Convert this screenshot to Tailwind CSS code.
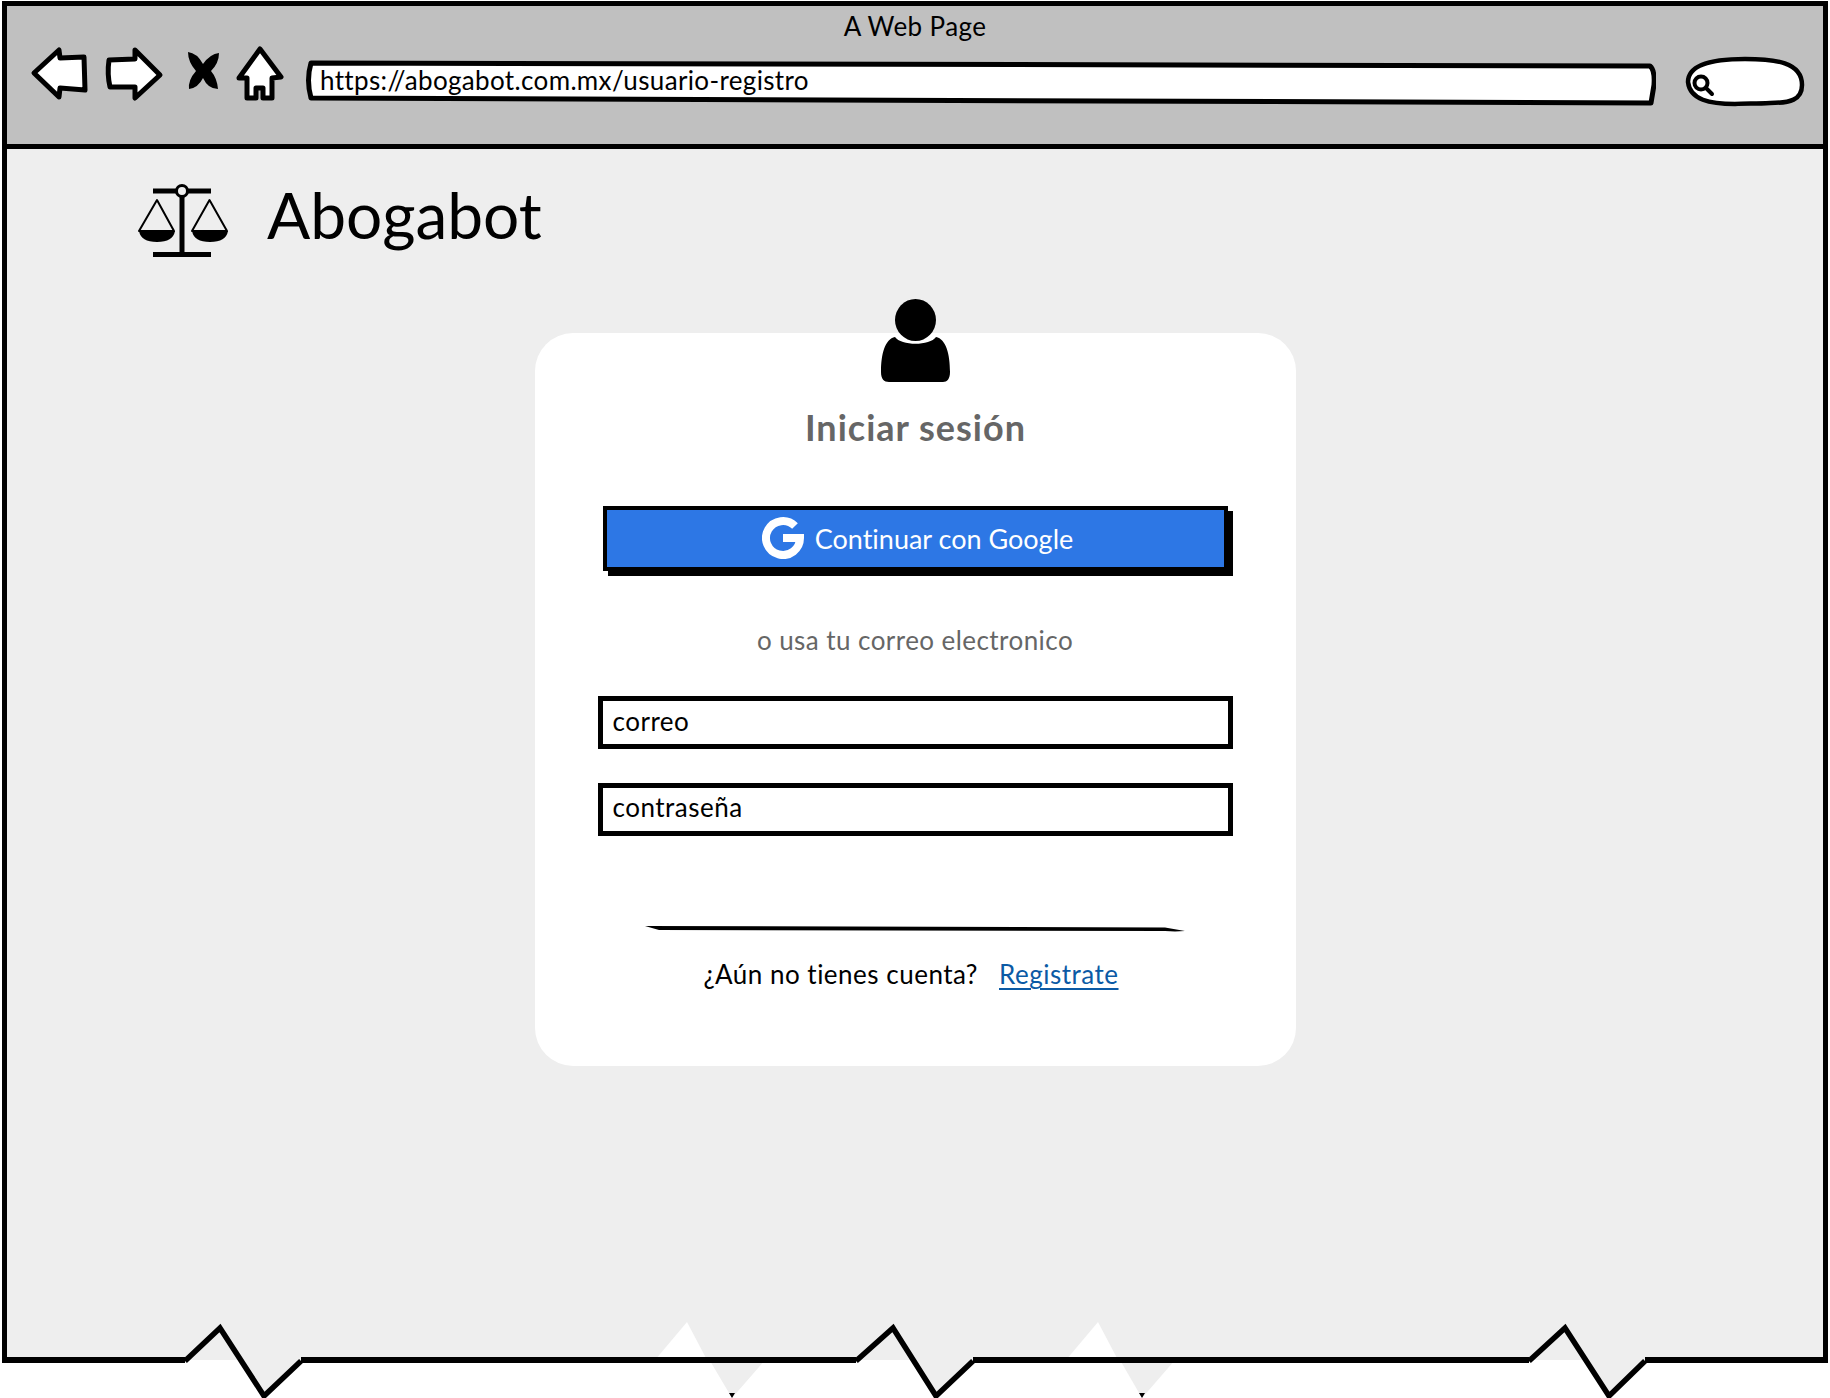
<!doctype html>
<html lang="es">
<head>
<meta charset="utf-8">
<title>Abogabot</title>
<script src="https://cdn.jsdelivr.net/npm/@tailwindcss/browser@4"></script>
</head>
<body class="bg-white">
<div class="relative w-[1830px] h-[1398px] overflow-hidden bg-white font-['Lato','Noto_Sans',sans-serif] text-black [font-variant-ligatures:none]">
  <div class="ml-[2px] mt-[1px] w-[1826px] h-[1359px] flex flex-col border-x-[5px] border-t-[5px] border-black bg-[#eeeeee]">
    <header class="h-[143px] shrink-0 bg-[#c0c0c0] border-b-[5px] border-black">
      <div class="h-[38px] flex items-center justify-center text-[26px] tracking-[0.4px] leading-none pt-[2px]">A Web Page</div>
      <div class="flex items-center pl-[23px] h-[64px]">
        <svg class="w-[58px] h-[64px] shrink-0" viewBox="30 44 58 64"><path d="M34 73 L59 50 L60 58 L84 57 L85 90 L60 88 L59 97 Z" fill="#fff" stroke="#000" stroke-width="5" stroke-linejoin="round"/></svg>
        <svg class="w-[60px] h-[64px] ml-[16px] shrink-0" viewBox="104 44 60 64"><path d="M109 60 L135 59 L135 50 L160 75 L135 98 L135 87 L110 87 Q107 74 109 60 Z" fill="#fff" stroke="#000" stroke-width="5" stroke-linejoin="round"/></svg>
        <svg class="w-[35px] h-[64px] ml-[22px] shrink-0" viewBox="186 44 35 64"><path d="M188 52 Q197 53 203 64 Q210 54 219 53 Q219 63 211 71 Q217 78 218 89 Q208 89 203 78 Q198 88 189 89 Q188 80 196 71 Q188 62 188 52 Z" fill="#000"/></svg>
        <svg class="w-[50px] h-[64px] ml-[14px] shrink-0" viewBox="235 44 50 64"><path d="M260 49 L281 77 L272 78 L272 98 L263 98 L263 88 L256 88 L256 98 L247 98 L247 78 L239 78 Z" fill="#fff" stroke="#000" stroke-width="5" stroke-linejoin="round"/></svg>
        <div class="relative w-[1351px] h-[64px] ml-[20px] shrink-0 flex items-center">
          <svg class="absolute inset-0 w-full h-full" viewBox="305 44 1351 64"><path d="M311 63 L1650 66 Q1655 70 1654 85 L1651 103 L311 98 Q306 80 311 63 Z" fill="#fff" stroke="#000" stroke-width="5" stroke-linejoin="round"/></svg>
          <span class="relative pl-[15px] pt-[8px] text-[26px] tracking-[0.35px] leading-none">https://abogabot.com.mx/usuario-registro</span>
        </div>
        <svg class="w-[122px] h-[64px] ml-[28px] shrink-0" viewBox="1684 44 122 64"><path d="M1735 104 C1710 104 1690 100 1688 82 C1688 62 1720 59 1745 59 C1775 59 1802 62 1802 85 C1802 100 1790 103 1770 103 C1755 104 1745 103 1735 104 Z" fill="#fff" stroke="#000" stroke-width="4.500"/><circle cx="1701" cy="83" r="6.500" fill="none" stroke="#000" stroke-width="4"/><path d="M1706 88 L1712 94" stroke="#000" stroke-width="4" stroke-linecap="round"/></svg>
      </div>
    </header>
    <div class="flex items-center h-[142px] mb-[42px] shrink-0 pl-[129px]">
      <svg class="w-[94px] h-[78px] shrink-0" viewBox="136 181 94 78">
        <path d="M153 191 H211 M153 254.500 H211" stroke="#000" stroke-width="5"/>
        <path d="M182 196 V253" stroke="#000" stroke-width="5"/>
        <circle cx="182" cy="191" r="5.500" fill="#eeeeee" stroke="#000" stroke-width="3"/>
        <path d="M157 200 L174 231 H139 Z M209.500 200 L227 231 H192 Z" fill="none" stroke="#000" stroke-width="2" stroke-linejoin="round"/>
        <path d="M139 231 H175 Q173 242 157 242 Q141 242 139 231 Z M192 231 H228 Q226 242 210 242 Q194 242 192 231 Z" fill="#000"/>
      </svg>
      <span class="ml-[37px] pb-[10px] text-[64px] leading-none">Abogabot</span>
    </div>
    <main class="w-[761px] h-[733px] mx-auto bg-white rounded-[38px] flex flex-col items-center shrink-0">
      <svg class="w-[70px] h-[84px] mt-[-34px] ml-[1px] shrink-0" viewBox="0 0 70 84">
        <ellipse cx="34.500" cy="21" rx="20.500" ry="21" fill="#000"/>
        <path d="M14 38 C20 47 49 47 55 38 C65 40 69 55 69 73 C69 80 66 83 62 83 H8 C3 83 0 80 0 73 C0 55 4 40 14 38 Z" fill="#000"/>
      </svg>
      <h1 class="mt-[24px] ml-[1px] h-[40px] flex items-center text-[36px] tracking-[1px] font-bold leading-none text-[#666]">Iniciar sesión</h1>
      <button class="mt-[59px] w-[625px] h-[65px] shrink-0 ml-[1px] border-4 border-black bg-[#2d77e5] shadow-[5px_5px_0_#000] flex items-center justify-center pl-[4px] pb-[1px] text-white text-[27px] leading-none">
        <svg class="w-[42px] h-[42px] mr-[11px] shrink-0" viewBox="0 0 42 42"><path d="M33 9 A17 17 0 1 0 38 21 H21" fill="none" stroke="#fff" stroke-width="8"/></svg>
        <span>Continuar con Google</span>
      </button>
      <p class="mt-[53px] h-[32px] flex items-center text-[26px] tracking-[0.44px] leading-none text-[#666]">o usa tu correo electronico</p>
      <div class="mt-[40px] w-[635px] h-[53px] shrink-0 border-[5px] border-black flex items-center pl-[10px] pb-[4px] text-[26px] tracking-[0.5px] leading-none">correo</div>
      <div class="mt-[34px] w-[635px] h-[53px] shrink-0 border-[5px] border-black flex items-center pl-[10px] pb-[5px] text-[26px] tracking-[0.5px] leading-none">contraseña</div>
      <svg class="mt-[90px] w-[540px] h-[6px] shrink-0" viewBox="0 0 540 6"><path d="M0 0 L520 1.500 L540 5 L530 5.500 L520 5 L14 4 Z" fill="#000"/></svg>
      <p class="mt-[26px] mr-[8px] flex items-center text-[26px] tracking-[0.5px] leading-[32px]">
        <span>¿Aún no tienes cuenta?</span>
        <a class="ml-[21px] text-[#0b5aa5] underline underline-offset-[4px]" href="#">Registrate</a>
      </p>
    </main>
  </div>
  <svg class="absolute left-0 top-[1318px] w-[1830px] h-[80px]" viewBox="0 1318 1830 80">
    <path d="M655 1360 L687 1322 L732 1398 L765 1360 Z" fill="#eeeeee"/>
    <path d="M655 1360 L687 1322 L707 1360 Z" fill="#fff"/>
    <path d="M1066 1360 L1098 1322 L1142 1398 L1175 1360 Z" fill="#eeeeee"/>
    <path d="M1066 1360 L1098 1322 L1118 1360 Z" fill="#fff"/>
    <path d="M729 1393 H735 L732 1398 Z M1139 1393 H1145 L1142 1398 Z" fill="#000"/>
    <path d="M185 1360 L220 1322 L264 1398 L301 1360 Z M856 1360 L893 1322 L936 1398 L973 1360 Z M1529 1360 L1565 1322 L1609 1398 L1645 1360 Z" fill="#eeeeee"/>
    <path d="M2 1360 H185 M301 1360 H856 M973 1360 H1529 M1645 1360 H1828" fill="none" stroke="#000" stroke-width="6"/>
    <path d="M185 1361 L220 1328 L264 1396 L301 1361 M856 1361 L893 1328 L936 1396 L973 1361 M1529 1361 L1565 1328 L1609 1396 L1645 1361" fill="none" stroke="#000" stroke-width="5.500" stroke-miterlimit="10"/>
  </svg>
</div>
</body>
</html>
